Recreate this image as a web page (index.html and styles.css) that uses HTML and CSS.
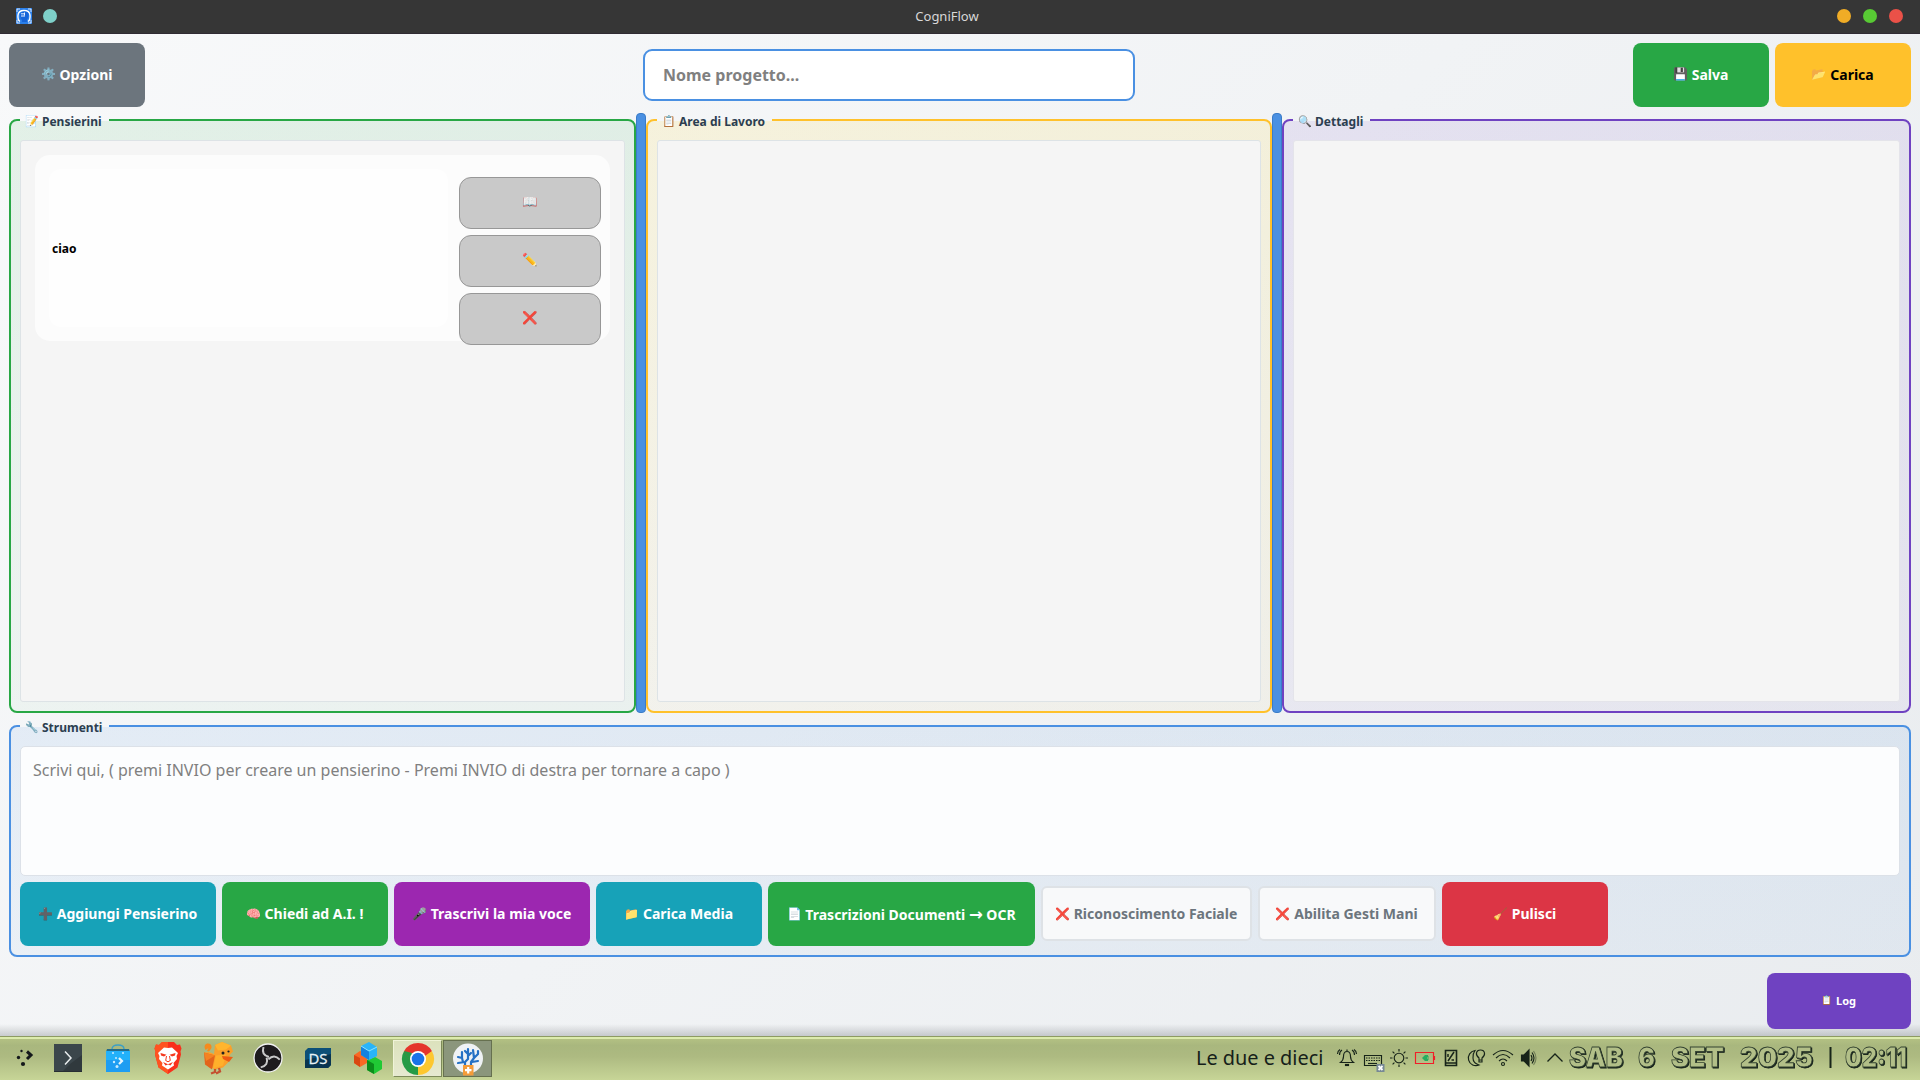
FILE: index.html
```html
<!DOCTYPE html>
<html lang="it">
<head>
<meta charset="utf-8">
<title>CogniFlow</title>
<link rel="stylesheet" href="styles.css">
</head>
<body>
<header class="titlebar">
  <div class="titlebar-left">
    <svg class="app-icon" viewBox="0 0 16 16"><rect width="16" height="16" fill="#2a7fea"/><path d="M1 4V1h3M12 1h3v3M15 12v3h-3M4 15H1v-3" fill="none" stroke="#fff" stroke-width=".8"/><path d="M4 13.500Q1.500 12 2 7 2.500 2.500 8 2.500t6 4.500q.5 5-2 6.500" fill="none" stroke="#fff" stroke-width="1.400"/><path d="M6 14v-2.500H4.500V9L4 8q0-4.500 4.500-4.500T12.500 7.500q0 2-1.500 4V14z" fill="#1664d8"/><path d="M5 5.800h3M5 8h4M8.500 4.500v3" stroke="#e7f1ff" fill="none"/></svg>
    <i class="dot teal"></i>
  </div>
  <span class="window-title">CogniFlow</span>
  <div class="titlebar-right"><i class="dot amber"></i><i class="dot green"></i><i class="dot red"></i></div>
</header>

<main class="window">
  <div class="topbar">
    <button class="btn gray"><span class="emoji">⚙️</span>Opzioni</button>
    <input class="project" placeholder="Nome progetto...">
    <div class="file-actions">
      <button class="btn success"><span class="emoji">💾</span>Salva</button>
      <button class="btn warning"><span class="emoji">📂</span>Carica</button>
    </div>
  </div>

  <div class="columns">
    <fieldset class="group thoughts">
      <legend><span class="emoji">📝</span>Pensierini</legend>
      <div class="pane">
        <article class="card">
          <div class="card-text">ciao</div>
          <div class="card-actions">
            <button><span class="emoji">📖</span></button>
            <button><span class="emoji">✏️</span></button>
            <button><span class="emoji">❌</span></button>
          </div>
        </article>
      </div>
    </fieldset>
    <div class="splitter"></div>
    <fieldset class="group work">
      <legend><span class="emoji">📋</span>Area di Lavoro</legend>
      <div class="pane"></div>
    </fieldset>
    <div class="splitter"></div>
    <fieldset class="group details">
      <legend><span class="emoji">🔍</span>Dettagli</legend>
      <div class="pane"></div>
    </fieldset>
  </div>

  <fieldset class="group tools">
    <legend><span class="emoji">🔧</span>Strumenti</legend>
    <textarea class="entry" placeholder="Scrivi qui, ( premi INVIO per creare un pensierino - Premi INVIO di destra per tornare a capo )"></textarea>
    <div class="tool-row">
      <button class="btn info w-l"><span class="emoji">➕</span>Aggiungi Pensierino</button>
      <button class="btn success w-m"><span class="emoji">🧠</span>Chiedi ad A.I. !</button>
      <button class="btn purple w-l"><span class="emoji">🎤</span>Trascrivi la mia voce</button>
      <button class="btn info w-m"><span class="emoji">📁</span>Carica Media</button>
      <button class="btn success w-ocr"><span class="emoji">📄</span><span>Trascrizioni Documenti <span class="arrow">→</span> OCR</span></button>
      <button class="toggle w-face"><span class="emoji">❌</span>Riconoscimento Faciale</button>
      <button class="toggle w-hand"><span class="emoji">❌</span>Abilita Gesti Mani</button>
      <button class="btn danger w-m"><span class="emoji">🧹</span>Pulisci</button>
    </div>
  </fieldset>

  <div class="footer"><button class="btn log"><span class="emoji">📋</span>Log</button></div>
</main>

<footer class="taskbar">
  <nav class="launchers">
    <span class="task first"><svg viewBox="0 0 32 32"><g fill="#14181b"><circle cx="12.500" cy="9" r="1.200"/><circle cx="9.500" cy="15.500" r="1.700"/><circle cx="14" cy="22" r="2.100"/></g><path d="M18 9.500l4 3.500-4 4" fill="none" stroke="#14181b" stroke-width="3"/></svg></span>
    <span class="task"><svg viewBox="0 0 32 32"><rect x="2" y="2" width="28" height="28" fill="#3b464b"/><path d="M18 22l12-9v17H10z" fill="#30393d"/><path d="M2 29.500h28" stroke="#272e32"/><path d="M13 9.500l6 6.500-6 6.500" fill="none" stroke="#e8eced" stroke-width="1.500"/></svg></span>
    <span class="task"><svg viewBox="0 0 32 32"><path d="M10 11V7q0-4 6-4t6 4v4" fill="none" stroke="#3b9fc6" stroke-width="1.300"/><path d="M5 7h22l1 3H4z" fill="#246b8a"/><path d="M4 9h24v21H4z" fill="#1e9df2"/><path d="M4 9h24v9H4z" fill="#22b1fa"/><g fill="#c8ebff"><circle cx="11" cy="11" r="1"/><circle cx="21" cy="11" r="1"/><circle cx="14" cy="16" r="1"/><circle cx="12" cy="20" r="1.200"/><circle cx="15" cy="24.500" r="1.500"/></g><path d="M17 16l3 3-3 3" fill="none" stroke="#e5f6ff" stroke-width="2.200"/></svg></span>
    <span class="task"><svg viewBox="0 0 32 32"><path d="M10 0h12l3 3 3-.5 1.500 4-1 3 .5 3-3.500 13L16 32 6.500 25.500 3 12.500l.5-3-1-3L4 2.500 7 3z" fill="#f9301c"/><path d="M10 0h6v32L6.500 25.500 3 12.500l.5-3-1-3L4 2.500 7 3z" fill="#ff5320"/><path d="M16 6l4-.5 6 5.500-1.500 3 .5 3-3.500 4 .5 2.500L16 27.500 10 23.500l.5-2.500L7 17l.5-3L6 11l6-5.500z" fill="#fff"/><path d="M8.500 11l6 1.800-2.500 1.700-3-1zm15 0l-6 1.800 2.500 1.700 3-1zM11 20l5 2.200 5-2.200-2.500 3.500-2.500-1-2.500 1z" fill="#f4391f"/><path d="M14.500 14l-.8 4.500 2.300 1.300 2.300-1.300-.8-4.500" fill="none" stroke="#f4391f"/></svg></span>
    <span class="task"><svg viewBox="0 0 32 32"><path d="M3.500 8Q1 3 5 1.500q5-.5 4.500 4.500L7 9.500 5 9l1.500-3z" fill="#f68a1c"/><path d="M13 3l7-3 9 3.500 2 6-3 3-2 8-5 5-8 2-9-5-1-12 4-.5 5 2z" fill="#fba02a"/><path d="M2 10.500l11 3-3 14-7-5z" fill="#e3641c"/><path d="M2 10.500L13 13.500 4 19z" fill="#f48322"/><path d="M13 3l7-3 9 3.500-5 4-8 1z" fill="#ffb52e"/><path d="M14 13.500l10-1-3 11-10 3z" fill="#ffb02b"/><path d="M20 14l11 1-4 5-6-3z" fill="#ee5a12"/><circle cx="21" cy="11" r="1.500" fill="#222"/><circle cx="26.500" cy="9.500" r="1.100" fill="#222"/><path d="M13 27v3l-4 1.500m8-5.500l1 3.500-4 2" stroke="#c4502f" stroke-width="2.300" fill="none"/></svg></span>
    <span class="task"><svg viewBox="0 0 32 32"><circle cx="16" cy="16" r="14" fill="#1d1b1e" stroke="#f2f2f2" stroke-width="1.300"/><g fill="none" stroke="#c9c9ca" stroke-width="2"><path d="M17 15Q9 13 11.500 5"/><path d="M17 15Q9 13 11.500 5" transform="rotate(120 16 16)"/><path d="M17 15Q9 13 11.500 5" transform="rotate(240 16 16)"/></g></svg></span>
    <span class="task"><svg viewBox="0 0 32 32"><path d="M6 6h23v17l-3 3H3V9z" fill="#0c5078"/><path d="M3 18l26-6v11l-3 3H3z" fill="#083550"/><text x="16" y="21.500" text-anchor="middle" textLength="19" lengthAdjust="spacingAndGlyphs" class="ds">DS</text></svg></span>
    <span class="task"><svg viewBox="0 0 32 32"><path d="M2 13l6-4 7 3v9l-7 4-6-4z" fill="#f96824"/><path d="M2 13l6 3v9l-6-4z" fill="#d94711"/><path d="M15 18l8-3 7 4v8l-8 5-7-4z" fill="#20c935"/><path d="M15 18l7 4v10l-7-4z" fill="#0b8d1b"/><path d="M9 4l8-4 8 5v9l-8 4-8-5z" fill="#28b4f9"/><path d="M9 4l8 5v9l-8-5z" fill="#1682de"/><path d="M9 4l8 5 8-4" fill="none" stroke="#8ee5ff"/></svg></span>
    <span class="task open"><svg viewBox="0 0 32 32"><path d="M16 16L2.140 8A16 16 0 0 1 29.860 8z" fill="#e5352b"/><path d="M16 16L29.860 8A16 16 0 0 1 16 32z" fill="#fdc72f"/><path d="M16 16V32A16 16 0 0 1 2.140 8z" fill="#259b45"/><path d="M16 8h13.860L23 13zM9.500 20L2.140 8 9 8z" fill="#e5352b"/><path d="M2.140 8L9.070 20 10 10z" fill="#259b45"/><path d="M16 32l7-12 2 5z" fill="#fdc72f"/><circle cx="16" cy="16" r="8" fill="#fff"/><circle cx="16" cy="16" r="6.300" fill="#1a73e8"/></svg></span>
    <span class="task active"><svg viewBox="0 0 32 32"><circle cx="16" cy="15.500" r="15" fill="#eff2f5"/><g fill="none" stroke="#2470c4" stroke-width="2.200" stroke-linecap="round" stroke-linejoin="round"><path d="M13 22v-3l-7 1M13 19l3-3V6M16 13l3-3M16 11l-3-3M11 19l-1-4-4-1M10 15V9M19 22v-3l3-4-1-8M22 15l4-4V8M20 19l6-1"/></g><rect x="11" y="22" width="10.500" height="10.500" fill="#f59b38"/><path d="M16.200 24v6.500M13 27.200h6.500" stroke="#fff" stroke-width="2.200"/></svg></span>
  </nav>
  <div class="tray">
    <span class="spoken-time">Le due e dieci</span>
    <div class="tray-icons">
      <svg viewBox="0 0 24 24"><path d="M5.500 16.500c2.500-2 3-3 3-6Q8.500 5.500 12 5.500t3.500 5c0 3 .5 4 3 6zM12 3.500v2"/><path d="M7 4Q4.500 5.500 4.500 9M5 3.500Q2.500 5 2.500 8M17 4q2.500 1.500 2.500 5M19 3.500Q21.500 5 21.500 8"/><path d="M10.500 18.500h3v1h-3z" fill="#172419"/></svg>
      <svg viewBox="0 0 24 24"><path d="M3.500 9.500h17v10h-17z"/><path d="M5 12h14M5 14.500h14" stroke-dasharray="1.500 1"/><path d="M7 17.500h9"/><path d="M15.500 18h8v8h-8z" fill="#778994" stroke="none"/><path d="M17.500 20l4 4m0-4l-4 4" stroke="#fff" stroke-width="1.800"/></svg>
      <svg viewBox="0 0 24 24"><circle cx="12" cy="12" r="4.800"/><path d="M12 3v2.500M12 18.500V21M3 12h2.500m13 0H21M5.600 5.600l1.800 1.800m9.200 9.200l1.800 1.800m0-12.800l-1.800 1.800m-9.200 9.200l-1.800 1.800"/></svg>
      <svg viewBox="0 0 24 24"><path d="M2.500 6.500h18v11h-18zM21.500 10v4" stroke="#f11e28"/><path d="M9 12l3-3h3v2h-1v2h1v2h-3zM14 10.500h2v1h-2zm0 2h2v1h-2z" fill="#27ae60" stroke="none"/></svg>
      <svg viewBox="0 0 24 24"><path d="M6.500 4.500h11v15h-11z" stroke-width="1.600"/><path d="M9 15l6-9M9 8v3m3.500 3H15m-9 3h12" stroke-width="1.500"/></svg>
      <svg viewBox="0 0 24 24"><path d="M10 4.500A7.600 7.600 0 1 0 14 19q-6-2-6-7 0-5 2-7.500z"/><path d="M14 12q-3-2.500-2.500-5Q12 4 15.500 4T19.500 7q.5 2.500-2.500 5v4h-3zM14 14h3"/></svg>
      <svg viewBox="0 0 24 24"><path d="M2 9q10-9 20 0M5 12q7-7 14 0M8 15q4-4 8 0"/><circle cx="12" cy="18" r="1.500"/></svg>
      <svg viewBox="0 0 24 24"><path d="M4.500 9h1.500v6H4.500zM7 9l5-5v16l-5-5z" fill="#172419"/><path d="M14 9q2 3 0 6m1-8.500q4 5.500 0 11"/><path d="M16.500 5q5 7 0 14" opacity=".4"/></svg>
      <svg viewBox="0 0 24 24"><path d="M4.500 15.500L12 8l7.500 7.500" stroke-width="1.300"/></svg>
    </div>
    <svg class="clock" viewBox="0 0 346 30">
      <g class="clock-text"><text x="2" y="22" textLength="54" lengthAdjust="spacingAndGlyphs">SAB</text><text x="71" y="22" textLength="17" lengthAdjust="spacingAndGlyphs">6</text><text x="104" y="22" textLength="53" lengthAdjust="spacingAndGlyphs">SET</text><text x="173" y="22" textLength="73" lengthAdjust="spacingAndGlyphs">2025</text><text x="278" y="22" textLength="62" lengthAdjust="spacingAndGlyphs">02:11</text></g>
      <path d="M263.500 2v21"/>
    </svg>
  </div>
</footer>
</body>
</html>
```
FILE: styles.css
```css
* { box-sizing: border-box; }
body {
  margin: 0; width: 1920px; height: 1080px; overflow: hidden;
  display: flex; flex-direction: column;
  font-family: "Noto Sans", sans-serif; color: #2c3e50;
}
button, input, textarea { font-family: inherit; margin: 0; }
.emoji { font-family: "Noto Color Emoji", "Noto Sans", sans-serif; font-size: 12px; line-height: 1; width: 14px; text-align: center; font-weight: 400; display: inline-flex; justify-content: center; flex: none; }

.titlebar {
  height: 34px; flex: none; background: #363636; border-bottom: 1px solid #302b33;
  display: grid; grid-template-columns: 1fr auto 1fr; align-items: center; padding: 0 17px 1px 16px;
}
.titlebar-left, .titlebar-right { display: flex; align-items: center; }
.titlebar-left { gap: 11px; }
.titlebar-right { gap: 12px; justify-content: flex-end; }
.app-icon { width: 16px; height: 16px; }
.window-title { font-size: 13px; color: #d8d8d8; margin-right: 25px; }
.dot { width: 14px; height: 14px; border-radius: 50%; }
.teal { background: #7fd1ca; }
.amber { background: #f0ac26; }
.green { background: #58c934; }
.red { background: #ea5148; }

.window {
  flex: 1; padding: 9px 9px 0; display: flex; flex-direction: column;
  background:
    linear-gradient(to top, rgba(90, 95, 100, .28), rgba(90, 95, 100, 0) 12px),
    linear-gradient(135deg, #f8f9fa 0%, #f1f3f5 50%, #e9ecef 100%);
}
.topbar { height: 64px; display: flex; align-items: center; justify-content: space-between; }
.topbar .btn { padding-bottom: 2px; }
.project {
  width: 492px; height: 52px; border: 2px solid #4a90e2; border-radius: 9px; background: #fff;
  padding: 0 18px; font-size: 16px; font-weight: 700; outline: 0;
}
.project::placeholder, .entry::placeholder { color: #808080; opacity: 1; }
.file-actions { display: flex; gap: 6px; }
.btn {
  width: 136px; height: 64px; border: 0; border-radius: 8px; color: #fff; font-size: 14px; font-weight: 700;
  display: flex; align-items: center; justify-content: center; gap: 4px; padding: 0; white-space: nowrap;
}
.gray { background: #6c757d; }
.success { background: #28a745; }
.warning { background: #ffc12b; color: #000; }
.info { background: #17a2b8; }
.purple { background: #9c27b0; }
.danger { background: #dc3545; }
.arrow { font-family: "DejaVu Sans", sans-serif; font-size: 16.5px; line-height: 1; }

.columns { display: flex; height: 602px; margin-top: 4px; }
.group {
  min-width: 0; margin: 0; border: 2px solid; border-radius: 8px; padding: 11px 9px 8px; display: flex; flex-direction: column;
}
.group > legend {
  display: flex; align-items: center; gap: 3px; height: 18px; margin-left: 0; padding: 2px 7px 0 5px;
  color: #2c3e50; font-size: 12px; font-weight: 700;
}
.group > legend .emoji { font-size: 11px; justify-content: flex-end; }
.thoughts { width: 627px; border-color: #28a745; background: linear-gradient(rgba(40, 167, 69, .1), rgba(40, 167, 69, .04)); }
.work { width: 626px; border-color: #ffc12b; background: linear-gradient(rgba(255, 210, 20, .12), rgba(255, 193, 7, .04)); }
.details { width: 629px; border-color: #6f42c1; background: linear-gradient(rgba(111, 66, 193, .1), rgba(111, 66, 193, .05)); }
.splitter { width: 10px; margin-top: 2px; border: 1px solid #3a7cc8; border-radius: 4px; background: #4a90e2; }
.pane { height: 562px; border: 1px solid #dde3e6; border-radius: 3px; background: #f5f5f5; padding: 14px; }
.details .pane { border-color: #e4e4ea; }

.card { height: 186px; border-radius: 15px; background: #fcfcfc; padding: 14px 9px 0 14px; display: flex; justify-content: space-between; }
.card-text { width: 399px; height: 158px; border-radius: 12px; background: #fefefe; padding-left: 3px; display: flex; align-items: center; color: #000; font-size: 12px; font-weight: 700; }
.card-actions { padding-top: 8px; display: flex; flex-direction: column; gap: 6px; }
.card-actions button { width: 142px; height: 52px; flex: none; border: 1px solid #979797; border-radius: 12px; background: #c9c9c9; padding: 0 0 2px; display: flex; align-items: center; justify-content: center; }
.card-actions .emoji { font-size: 12.5px; }

.tools { margin-top: 4px; height: 240px; border-color: #4a90e2; background: linear-gradient(rgba(74, 144, 226, .1), rgba(74, 144, 226, .06)); }
.entry { width: 1880px; height: 130px; flex: none; border: 1px solid #dce1e8; border-radius: 5px; background: #fcfdfe; resize: none; padding: 12px; font-size: 16px; line-height: 22px; outline: 0; }
.tool-row { display: flex; align-items: center; gap: 6px; margin-top: 6px; }
.tool-row .btn { padding-bottom: 1px; }
.tool-row .w-ocr { padding-bottom: 0; }
.w-m { width: 166px; } .w-l { width: 196px; } .w-ocr { width: 267px; }
.toggle { height: 55px; margin-bottom: 1px; border: 2px solid #dee2e6; border-radius: 6px; background: #f8f9fa; color: #6c757d; font-size: 14px; font-weight: 700; padding: 0; display: flex; align-items: center; justify-content: center; gap: 4px; white-space: nowrap; }
.w-face { width: 211px; } .w-hand { width: 178px; }
.footer { display: flex; justify-content: flex-end; margin-top: 16px; }
.log { width: 144px; height: 56px; background: #6f42c1; font-size: 11px; gap: 5px; padding-bottom: 1px; }
.log .emoji { font-size: 9px; width: 9px; }

.taskbar {
  height: 44px; flex: none; border-top: 1px solid #8d9b62; box-shadow: inset 0 2px #dcebad;
  background: linear-gradient(#b6c384, #a9b77e 20%, #adba81 45%, #c7d597);
  display: flex; justify-content: space-between;
}
.launchers { display: flex; padding-left: 43px; }
.task { width: 50px; height: 42px; display: flex; align-items: center; justify-content: center; }
.task svg { width: 32px; height: 32px; overflow: visible; }
.task.first { margin: 0 -7px 0 -43px; }
.open, .active { width: 49px; height: 37px; margin: 3px 1px 0 0; border: 1px solid #7d8a5a; }
.open { background: linear-gradient(#dce2bd, #e6e9d0); border-color: #f0f4d8 #7d8a5a #7d8a5a #f0f4d8; }
.active { background: #8b967c; border-color: #66704f; }
.ds { font: 500 14px "Open Sans", sans-serif; fill: #e6f2f7; stroke: #e6f2f7; stroke-width: .3; }
.tray { display: flex; align-items: center; height: 41px; color: #152019; }
.spoken-time { font-size: 19.9px; width: 139px; white-space: nowrap; }
.tray-icons { display: flex; gap: 2px; }
.tray-icons svg { width: 24px; height: 24px; overflow: visible; fill: none; stroke: #172419; stroke-width: 1.15; }
.clock { width: 346px; height: 30px; margin: 4px 7px 0 0; overflow: visible; }
.clock-text { filter: drop-shadow(1.500px 1.500px 0 #14201a); }
.clock text { font: 900 27px Inter, sans-serif; fill: #b2bf88; stroke: #344331; stroke-width: .8; }
.clock path { stroke: #172419; stroke-width: 2; }
```
